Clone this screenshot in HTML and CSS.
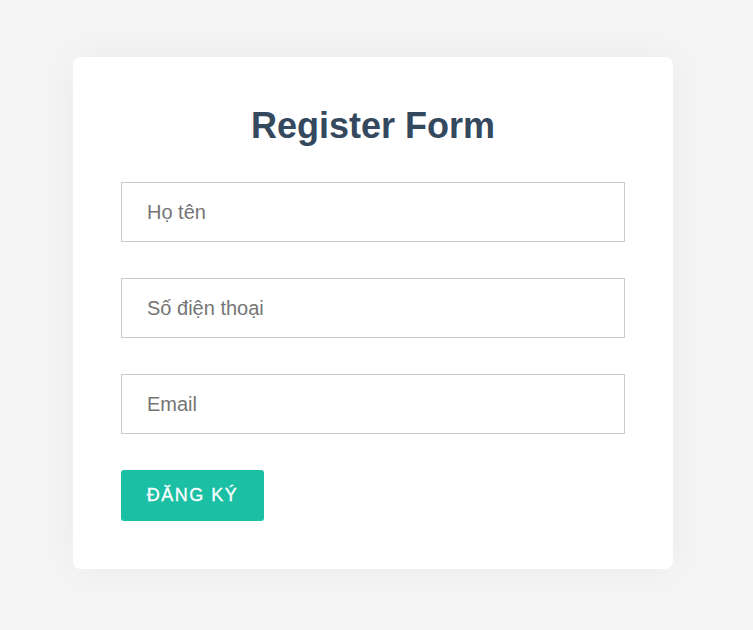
FILE: index.html
```html
<!DOCTYPE html>
<html lang="vi">
<head>
<meta charset="utf-8">
<title>Register Form</title>
<link rel="stylesheet" href="styles.css">
</head>
<body>
<div class="page">
  <form class="card">
    <h1 class="title">Register Form</h1>
    <input class="field" type="text" placeholder="Họ tên">
    <input class="field" type="text" placeholder="Số điện thoại">
    <input class="field" type="email" placeholder="Email">
    <button class="btn" type="button">ĐĂNG KÝ</button>
  </form>
</div>
</body>
</html>
```
FILE: styles.css
```css
* { box-sizing: border-box; }
html, body { margin: 0; padding: 0; }
body {
  background: #f5f5f5;
  font-family: "Liberation Sans", Arial, sans-serif;
  width: 753px;
  height: 630px;
  overflow: hidden;
}
.page {
  padding: 57px 0 0 73px;
}
.card {
  width: 600px;
  height: 512px;
  background: #fff;
  border-radius: 8px;
  padding: 48px;
  box-shadow: 0 0 40px rgba(0,0,0,0.05);
  display: flex;
  flex-direction: column;
  align-items: flex-start;
}
.title {
  align-self: stretch;
  margin: 0 0 36px;
  text-align: center;
  font-size: 36px;
  line-height: 41px;
  font-weight: bold;
  color: #34495e;
}
.field {
  display: block;
  width: 504px;
  height: 60px;
  margin: 0 0 36px;
  padding: 0 25px;
  border: 1px solid #cccccc;
  border-radius: 0;
  font-family: "Liberation Sans", Arial, sans-serif;
  font-size: 20px;
  color: #333;
  outline: none;
  background: #fff;
}
.field::placeholder { color: #757575; }
.btn {
  width: 143px;
  height: 51px;
  border: none;
  border-radius: 3px;
  background: #1bbfa4;
  color: #fff;
  font-family: "Liberation Sans", Arial, sans-serif;
  font-size: 18px;
  letter-spacing: 1.5px;
  padding: 0;
  -webkit-text-stroke: 0.3px #fff;
}
```
